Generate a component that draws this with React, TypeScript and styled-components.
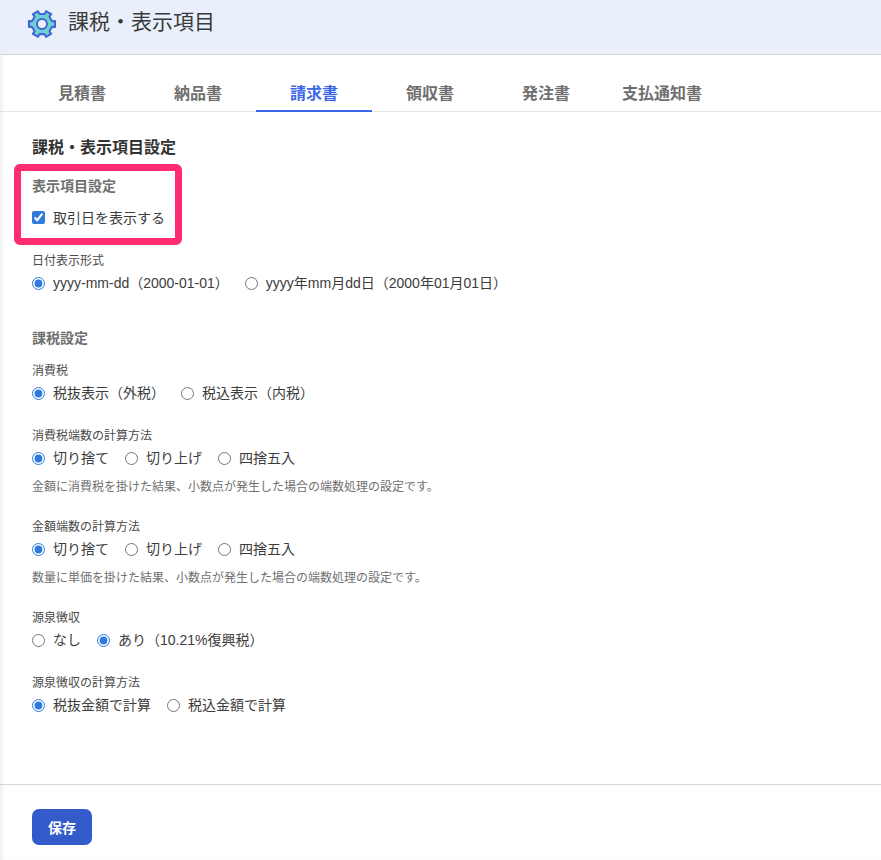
import React from 'react';
import styled, { createGlobalStyle } from 'styled-components';

const GlobalStyle = createGlobalStyle`
    html, body {
        margin: 0;
        padding: 0;
        background: #fff;
        font-family: "Liberation Sans", "Noto Sans CJK JP", sans-serif;
        color: #333;
    }
`;

const Page = styled.div`
    position: relative;
    width: 881px;
    height: 860px;
    overflow: hidden;
    box-shadow: inset 5px 0 5px -3px rgba(0, 0, 0, 0.07);
`;

const Header = styled.header`
    display: flex;
    align-items: center;
    gap: 11px;
    height: 55px;
    box-sizing: border-box;
    padding: 0 0 6px 27px;
    background-color: #e9f0fc;
    border-bottom: 1px solid #d5d6da;
`;

const PageTitle = styled.h1`
    margin: 0 0 4px;
    font-size: 21px;
    font-weight: 400;
    line-height: 28px;
    color: #3a3a3a;
`;

const Tabs = styled.nav`
    display: flex;
    height: 57px;
    box-sizing: border-box;
    padding: 16px 0 0 24px;
    border-bottom: 1px solid #e6e6e6;
`;

const Tab = styled.div<{ $active?: boolean }>`
    width: 116px;
    height: 41px;
    box-sizing: border-box;
    padding-top: 11px;
    text-align: center;
    font-size: 16px;
    font-weight: 700;
    line-height: 24px;
    color: ${(props) => (props.$active ? '#3b66e8' : '#6f6f6f')};
    border-bottom: ${(props) => (props.$active ? '2px solid #3b66e8' : '0')};
`;

const Content = styled.main`
    height: 673px;
    box-sizing: border-box;
    padding: 26px 32px 0;
    border-bottom: 1px solid #d5d6da;
`;

const SectionTitle = styled.h2`
    margin: 0 0 19px;
    font-size: 16px;
    font-weight: 700;
    line-height: 20px;
    color: #333;
`;

const GroupTitle = styled.h3<{ $gap: number }>`
    margin: 0 0 ${(props) => props.$gap}px;
    font-size: 14px;
    font-weight: 700;
    line-height: 18px;
    color: #6f6f6f;
`;

const CheckRow = styled.label`
    display: flex;
    align-items: center;
    gap: 8px;
    height: 20px;
    margin-bottom: 26px;
    font-size: 14px;
    color: #3c3c3c;
`;

const Field = styled.div<{ $bottom: number }>`
    margin-bottom: ${(props) => props.$bottom}px;
`;

const FieldLabel = styled.div`
    font-size: 12px;
    line-height: 16px;
    height: 16px;
    color: #4a4a4a;
`;

const RadioRow = styled.div`
    display: flex;
    gap: 16px;
    height: 20px;
    margin-top: 4px;
`;

const RadioLabel = styled.label`
    display: flex;
    align-items: center;
    gap: 8px;
    font-size: 14px;
    line-height: 20px;
    color: #3c3c3c;
    white-space: nowrap;
`;

const Input = styled.input`
    margin: 0;
    width: 13px;
    height: 13px;
    accent-color: #2f7bdc;
`;

const Hint = styled.p`
    margin: 11px 0 0;
    font-size: 12px;
    line-height: 16px;
    color: #6f6f6f;
`;

const Footer = styled.footer`
    padding: 24px 32px 0;
`;

const SaveButton = styled.button`
    width: 60px;
    height: 36px;
    padding: 0;
    border: 0;
    border-radius: 7px;
    background-color: #335bc9;
    color: #fff;
    font-family: inherit;
    font-size: 14px;
    font-weight: 700;
`;

const Highlight = styled.div`
    position: absolute;
    left: 14px;
    top: 164px;
    width: 168px;
    height: 81px;
    box-sizing: border-box;
    border: 7px solid #ff2d6f;
    border-radius: 6px;
    pointer-events: none;
`;

// six teeth, pointing left/right and on the diagonals
const gearPoints = () => {
    const pts: string[] = [];
    const at = (deg: number, r: number) => {
        const a = (deg * Math.PI) / 180;
        return `${(15 + r * Math.cos(a)).toFixed(2)},${(14 + r * Math.sin(a)).toFixed(2)}`;
    };
    for (let i = 0; i < 6; i++) {
        const c = i * 60;
        pts.push(at(c - 30, 10), at(c - 15, 10.5), at(c - 13, 13.4), at(c + 13, 13.4), at(c + 15, 10.5));
    }
    return pts.join(' ');
};

const GearIcon = () => (
    <svg width="30" height="28" viewBox="0 0 30 28" aria-hidden="true">
        <polygon
            points={gearPoints()}
            fill="#6dcfd2"
            stroke="#3f66d0"
            strokeWidth="2"
            strokeLinejoin="round"
        />
        <circle cx="15" cy="14" r="5" fill="#e9f0fc" stroke="#3f66d0" strokeWidth="2" />
    </svg>
);

type RadioGroupProps = { name: string; options: string[]; checked: number };

const RadioGroup = ({ name, options, checked }: RadioGroupProps) => (
    <RadioRow>
        {options.map((option, i) => (
            <RadioLabel key={option}>
                <Input type="radio" name={name} defaultChecked={i === checked} />
                {option}
            </RadioLabel>
        ))}
    </RadioRow>
);

const tabs = ['見積書', '納品書', '請求書', '領収書', '発注書', '支払通知書'];
const rounding = ['切り捨て', '切り上げ', '四捨五入'];

const App = () => (
    <Page>
        <GlobalStyle />
        <Header>
            <GearIcon />
            <PageTitle>課税・表示項目</PageTitle>
        </Header>
        <Tabs>
            {tabs.map((tab) => (
                <Tab key={tab} $active={tab === '請求書'}>
                    {tab}
                </Tab>
            ))}
        </Tabs>
        <Content>
            <SectionTitle>課税・表示項目設定</SectionTitle>
            <GroupTitle $gap={12}>表示項目設定</GroupTitle>
            <CheckRow>
                <Input type="checkbox" defaultChecked />
                取引日を表示する
            </CheckRow>
            <Field $bottom={36}>
                <FieldLabel>日付表示形式</FieldLabel>
                <RadioGroup
                    name="date"
                    options={['yyyy-mm-dd（2000-01-01）', 'yyyy年mm月dd日（2000年01月01日）']}
                    checked={0}
                />
            </Field>
            <GroupTitle $gap={16}>課税設定</GroupTitle>
            <Field $bottom={25}>
                <FieldLabel>消費税</FieldLabel>
                <RadioGroup name="tax" options={['税抜表示（外税）', '税込表示（内税）']} checked={0} />
            </Field>
            <Field $bottom={24}>
                <FieldLabel>消費税端数の計算方法</FieldLabel>
                <RadioGroup name="taxRound" options={rounding} checked={0} />
                <Hint>金額に消費税を掛けた結果、小数点が発生した場合の端数処理の設定です。</Hint>
            </Field>
            <Field $bottom={24}>
                <FieldLabel>金額端数の計算方法</FieldLabel>
                <RadioGroup name="amountRound" options={rounding} checked={0} />
                <Hint>数量に単価を掛けた結果、小数点が発生した場合の端数処理の設定です。</Hint>
            </Field>
            <Field $bottom={25}>
                <FieldLabel>源泉徴収</FieldLabel>
                <RadioGroup name="withholding" options={['なし', 'あり（10.21%復興税）']} checked={1} />
            </Field>
            <Field $bottom={0}>
                <FieldLabel>源泉徴収の計算方法</FieldLabel>
                <RadioGroup name="withholdingBase" options={['税抜金額で計算', '税込金額で計算']} checked={0} />
            </Field>
        </Content>
        <Footer>
            <SaveButton>保存</SaveButton>
        </Footer>
        <Highlight />
    </Page>
);

export default App;
